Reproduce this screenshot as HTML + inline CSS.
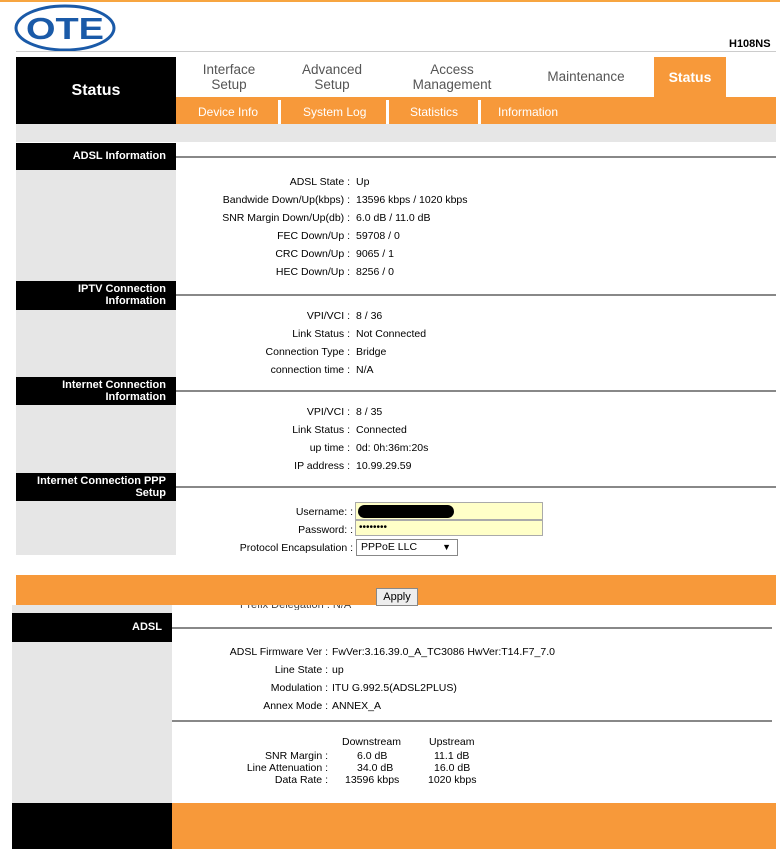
<!DOCTYPE html>
<html><head><style>
body{margin:0;width:780px;height:849px;background:#fff;position:relative;overflow:hidden;font-family:"Liberation Sans",Arial,sans-serif;}
.a{position:absolute}
.blk{position:absolute;background:#000;color:#fff;font-weight:bold;font-size:11px;text-align:right;box-sizing:border-box;padding-right:10px;line-height:12px}
.gr{position:absolute;background:#e6e6e6}
.ln{position:absolute;height:2px;background:#888}
.row{position:absolute;font-size:10.5px;color:#000;white-space:nowrap}
.tab{position:absolute;color:#555;font-size:13.5px;text-align:center;line-height:15px}
.sub{position:absolute;color:#fff;font-size:12px;top:105px}
</style></head><body>
<div class="a" style="left:0;top:0;width:780px;height:2px;background:#f7a540"></div>
<svg class="a" style="left:14px;top:4px" width="104" height="48"><ellipse cx="51" cy="24" rx="49" ry="22" fill="#fff" stroke="#1a5aa8" stroke-width="3"/><text x="51" y="35" text-anchor="middle" font-family="Liberation Sans" font-weight="bold" font-size="31" fill="#1a5aa8" textLength="78" lengthAdjust="spacingAndGlyphs">OTE</text></svg>
<div class="a" style="left:16px;top:51px;width:760px;height:1px;background:#ccc"></div>
<div class="a" style="left:729px;top:38px;font-size:11px;font-weight:bold">H108NS</div>
<div class="a" style="left:16px;top:57px;width:160px;height:67px;background:#000;color:#fff;font-weight:bold;font-size:16px;text-align:center;line-height:67px">Status</div>
<div class="tab" style="left:180px;top:62px;width:98px">Interface<br>Setup</div>
<div class="tab" style="left:283px;top:62px;width:98px">Advanced<br>Setup</div>
<div class="tab" style="left:395px;top:62px;width:114px">Access<br>Management</div>
<div class="tab" style="left:535px;top:69px;width:102px">Maintenance</div>
<div class="a" style="left:654px;top:57px;width:72px;height:40px;background:#f7993a;color:#fff;font-weight:bold;font-size:14px;text-align:center;line-height:40px">Status</div>
<div class="a" style="left:176px;top:97px;width:600px;height:27px;background:#f7993a"></div>
<div class="sub" style="left:198px">Device Info</div>
<div class="a" style="left:278px;top:100px;width:3px;height:24px;background:#fff"></div>
<div class="sub" style="left:303px">System Log</div>
<div class="a" style="left:386px;top:100px;width:3px;height:24px;background:#fff"></div>
<div class="sub" style="left:410px">Statistics</div>
<div class="a" style="left:478px;top:100px;width:3px;height:24px;background:#fff"></div>
<div class="sub" style="left:498px">Information</div>
<div class="gr" style="left:16px;top:124px;width:760px;height:18px"></div>

<div class="gr" style="left:16px;top:170px;width:160px;height:385px"></div>
<div class="blk" style="left:16px;top:143px;width:160px;height:27px;line-height:27px">ADSL Information</div>
<div class="ln" style="left:176px;top:156px;width:600px"></div>
<div class="blk" style="left:16px;top:281px;width:160px;height:29px;padding-top:2px">IPTV Connection<br>Information</div>
<div class="ln" style="left:176px;top:294px;width:600px"></div>
<div class="blk" style="left:16px;top:377px;width:160px;height:28px;padding-top:2px">Internet Connection<br>Information</div>
<div class="ln" style="left:176px;top:390px;width:600px"></div>
<div class="blk" style="left:16px;top:473px;width:160px;height:28px;padding-top:2px">Internet Connection PPP<br>Setup</div>
<div class="ln" style="left:176px;top:486px;width:600px"></div>

<div class="row" style="left:0;top:173px;width:780px;height:110px">
<div class="a" style="right:430px;text-align:right;line-height:18px">ADSL State :<br>Bandwide Down/Up(kbps) :<br>SNR Margin Down/Up(db) :<br>FEC Down/Up :<br>CRC Down/Up :<br>HEC Down/Up :</div>
<div class="a" style="left:356px;line-height:18px">Up<br>13596 kbps / 1020 kbps<br>6.0 dB / 11.0 dB<br>59708 / 0<br>9065 / 1<br>8256 / 0</div></div>
<div class="row" style="left:0;top:307px;width:780px;height:80px">
<div class="a" style="right:430px;text-align:right;line-height:18px">VPI/VCI :<br>Link Status :<br>Connection Type :<br>connection time :</div>
<div class="a" style="left:356px;line-height:18px">8 / 36<br>Not Connected<br>Bridge<br>N/A</div></div>
<div class="row" style="left:0;top:403px;width:780px;height:80px">
<div class="a" style="right:430px;text-align:right;line-height:18px">VPI/VCI :<br>Link Status :<br>up time :<br>IP address :</div>
<div class="a" style="left:356px;line-height:18px">8 / 35<br>Connected<br>0d: 0h:36m:20s<br>10.99.29.59</div></div>
<div class="row" style="left:0;top:503px;width:780px;height:60px">
<div class="a" style="right:427px;text-align:right;line-height:18px">Username: :<br>Password: :<br>Protocol Encapsulation :</div></div>
<div class="a" style="left:355px;top:502px;width:186px;height:16px;background:#ffffc8;border:1px solid #aaa"></div>
<div class="a" style="left:358px;top:505px;width:96px;height:13px;background:#000;border-radius:7px"></div>
<div class="a" style="left:355px;top:520px;height:16px;background:#ffffc8;border:1px solid #aaa;font-size:10px;line-height:14px;padding-left:3px;box-sizing:border-box;width:188px">••••••••</div>
<div class="a" style="left:356px;top:539px;width:102px;border:1px solid #888;font-size:10.5px;line-height:15px;padding-left:4px;box-sizing:border-box;height:17px">PPPoE LLC<span style="position:absolute;right:6px;font-size:9px">▼</span></div>

<div class="a" style="left:16px;top:575px;width:760px;height:30px;background:#f7993a"></div>
<div class="a" style="left:0;top:605px;width:780px;height:244px;background:#fff"></div>
<div class="a" style="left:240px;top:605px;width:120px;height:5px;overflow:hidden"><div style="position:absolute;top:-6px;font-size:11px;color:#444;white-space:nowrap">Prefix Delegation : N/A</div></div>
<div class="a" style="left:376px;top:588px;width:40px;height:16px;background:#eee;border:1px solid #888;font-size:11px;text-align:center;line-height:16px">Apply</div>
<div class="gr" style="left:12px;top:605px;width:160px;height:8px"></div>
<div class="blk" style="left:12px;top:613px;width:160px;height:29px;line-height:29px">ADSL</div>
<div class="ln" style="left:172px;top:627px;width:600px"></div>
<div class="gr" style="left:12px;top:642px;width:160px;height:161px"></div>
<div class="row" style="left:0;top:643px;width:780px;height:80px">
<div class="a" style="right:452px;text-align:right;line-height:18px">ADSL Firmware Ver :<br>Line State :<br>Modulation :<br>Annex Mode :</div>
<div class="a" style="left:332px;line-height:18px">FwVer:3.16.39.0_A_TC3086 HwVer:T14.F7_7.0<br>up<br>ITU G.992.5(ADSL2PLUS)<br>ANNEX_A</div></div>
<div class="ln" style="left:172px;top:720px;width:600px"></div>
<div class="row" style="left:0;top:736px;width:780px;height:60px;line-height:12px">
<div class="a" style="left:342px">Downstream</div><div class="a" style="left:429px">Upstream</div>
<div class="a" style="right:452px;top:14px;text-align:right">SNR Margin :<br>Line Attenuation :<br>Data Rate :</div>
<div class="a" style="left:357px;top:14px">6.0 dB<br>34.0 dB</div><div class="a" style="left:345px;top:38px">13596 kbps</div>
<div class="a" style="left:434px;top:14px">11.1 dB<br>16.0 dB</div><div class="a" style="left:428px;top:38px">1020 kbps</div></div>
<div class="a" style="left:12px;top:803px;width:160px;height:46px;background:#000"></div>
<div class="a" style="left:172px;top:803px;width:604px;height:46px;background:#f7993a"></div>
</body></html>
